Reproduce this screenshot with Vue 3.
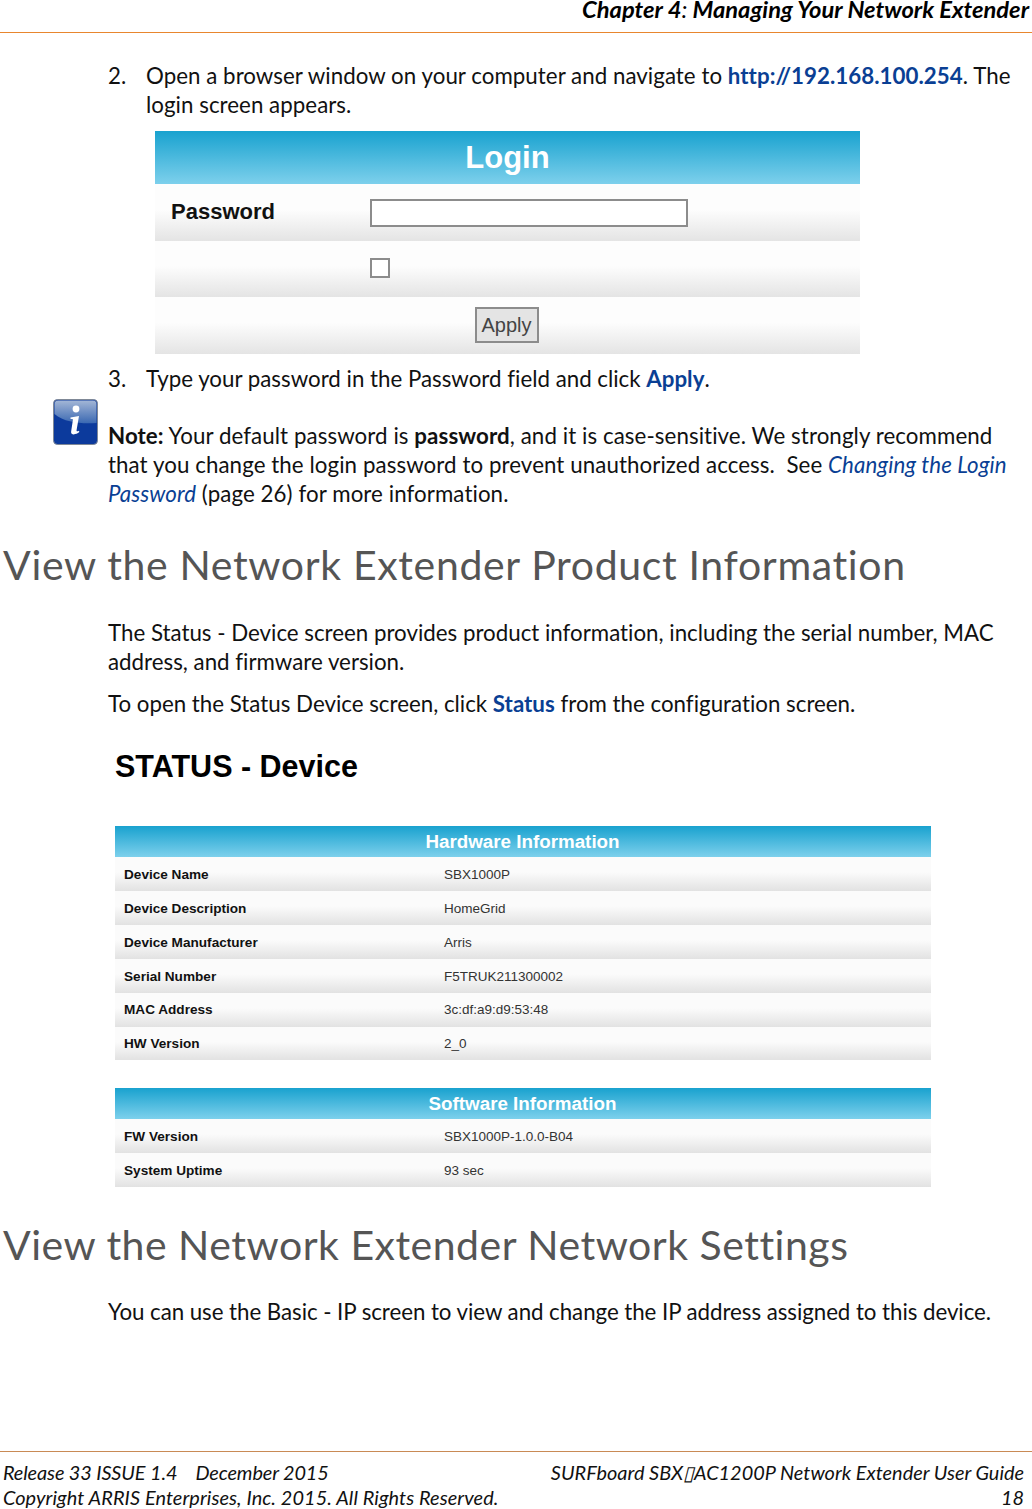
<script setup>
const hardware = [
  ['Device Name', 'SBX1000P'],
  ['Device Description', 'HomeGrid'],
  ['Device Manufacturer', 'Arris'],
  ['Serial Number', 'F5TRUK211300002'],
  ['MAC Address', '3c:df:a9:d9:53:48'],
  ['HW Version', '2_0'],
]
const software = [
  ['FW Version', 'SBX1000P-1.0.0-B04'],
  ['System Uptime', '93 sec'],
]
</script>

<template>
  <div class="page">
    <header class="top"><em>Chapter 4</em><i>:</i> <em>Managing Your Network Extender</em></header>

    <main class="body">
      <div class="step s2"><span class="num">2.</span><p>Open a browser window on your computer and navigate to <b class="link">http://192.168.100.254</b>. The login screen appears.</p></div>

      <section class="login">
        <div class="login-head">Login</div>
        <div class="login-row"><span class="pw">Password</span><span class="input"></span></div>
        <div class="login-row"><span class="check"></span></div>
        <div class="login-row center"><span class="apply">Apply</span></div>
      </section>

      <div class="step s3"><span class="num">3.</span><p>Type your password in the Password field and click <b class="link">Apply</b>.</p></div>

      <div class="note">
        <svg class="info" viewBox="0 0 45 46" width="45" height="46" aria-hidden="true">
          <defs>
            <linearGradient id="infoTop" x1="0" y1="0" x2="0" y2="1">
              <stop offset="0" stop-color="#a3b6d6"/><stop offset="1" stop-color="#3a68b2"/>
            </linearGradient>
          </defs>
          <rect x="0.5" y="0.5" width="44" height="45" rx="4" fill="#0c3a9c" stroke="#7f8896"/>
          <path d="M1.5 5a3.5 3.5 0 0 1 3.5-3.5h35a3.5 3.5 0 0 1 3.5 3.5v19C30 25 12 24 1.5 15z" fill="url(#infoTop)"/>
          <circle cx="23" cy="10" r="3.4" fill="#fff"/>
          <path d="M17.5 18.5l8.5-1.4-2.4 14c-.2 1.4.6 1.6 2.4.6l.3 1.4c-3 2.6-8.6 3.6-8.2-.4l1.9-12.4-2.6-.5z" fill="#fff"/>
        </svg>
        <p><b>Note:</b> Your default password is <b>password</b>, and it is case-sensitive. We strongly recommend that you change the login password to prevent unauthorized access.&nbsp; See <i class="link">Changing the Login Password</i> (page 26) for more information.</p>
      </div>

      <h2 class="h1">View the Network Extender Product Information</h2>
      <p class="para tight">The Status - Device screen provides product information, including the serial number, MAC address, and firmware version.</p>
      <p class="para second">To open the Status Device screen, click <b class="link">Status</b> from the configuration screen.</p>

      <section class="status">
        <h3>STATUS - Device</h3>
        <div class="tbl first">
          <div class="tbl-head">Hardware Information</div>
          <div v-for="r in hardware" :key="r[0]" class="tbl-row"><span class="k">{{ r[0] }}</span><span class="v">{{ r[1] }}</span></div>
        </div>
        <div class="tbl">
          <div class="tbl-head">Software Information</div>
          <div v-for="r in software" :key="r[0]" class="tbl-row"><span class="k">{{ r[0] }}</span><span class="v">{{ r[1] }}</span></div>
        </div>
      </section>

      <h2 class="h1 h1b">View the Network Extender Network Settings</h2>
      <p class="para last">You can use the Basic - IP screen to view and change the IP address assigned to this device.</p>
    </main>

    <footer class="foot">
      <div class="foot-row"><span class="narrow">Release 33 ISSUE 1.4 &nbsp;&nbsp; December 2015</span><span>SURFboard SBX▯AC1200P Network Extender User Guide</span></div>
      <div class="foot-row"><span class="wide">Copyright ARRIS Enterprises, Inc. 2015. All Rights Reserved.</span><span>18</span></div>
    </footer>
  </div>
</template>

<style>
html, body { margin: 0; background: #fff; }
</style>

<style scoped>
.page {
  width: 1032px;
  height: 1509px;
  background: #fff;
  color: #111;
  font-family: Lato, "Open Sans", sans-serif;
  font-size: 22.3px;
  line-height: 29px;
  font-variant-ligatures: none;
  overflow: hidden;
  display: flex;
  flex-direction: column;
}
p { margin: 0; }
.top {
  height: 33px;
  box-sizing: border-box;
  border-bottom: 1px solid #e8862e;
  text-align: right;
  padding-right: 3px;
  font-style: italic;
  font-weight: 700;
  font-size: 23.7px;
  line-height: 18px;
  color: #000;
  flex: none;
}
.top em { font-style: italic; }
.top i { font-weight: 400; }
.body { flex: 1; min-height: 0; }
.link { color: #0a3f94; }
i.link { font-style: italic; }
.step { display: flex; padding-left: 108px; padding-right: 20px; }
.num { width: 38px; flex: none; }
.s2 { padding-top: 28px; letter-spacing: 0.04px; }
.login {
  margin: 12px 0 0 155px;
  width: 705px;
}
.login-head {
  height: 53px;
  background: linear-gradient(#19a2cf, #7dd0ec);
  color: #fff;
  font: 700 31px/53px "Liberation Sans", Arial, sans-serif;
  text-align: center;
}
.login-row {
  height: 56.67px;
  background: linear-gradient(#fdfdfd 45%, #e4e4e4);
  display: flex;
  align-items: center;
  padding-left: 215px;
  position: relative;
}
.pw {
  position: absolute;
  left: 16px;
  font: 700 22px/1 "Liberation Sans", Arial, sans-serif;
  color: #111;
}
.input {
  width: 318px;
  height: 28px;
  margin-top: 2px;
  box-sizing: border-box;
  background: #fff;
  border: 2px solid #8c8c8c;
}
.check {
  width: 20px;
  height: 20px;
  margin-bottom: 2px;
  box-sizing: border-box;
  background: #fff;
  border: 2px solid #8c8c8c;
}
.center { padding-left: 0; justify-content: center; }
.apply {
  margin-left: -2px;
  margin-bottom: 2px;
  width: 64px;
  height: 36px;
  box-sizing: border-box;
  background: #e4e4e4;
  border: 2px solid #8c8c8c;
  color: #444;
  font: 400 20px/32px "Liberation Sans", Arial, sans-serif;
  text-align: center;
}
.s3 { padding-top: 10px; }
.note { position: relative; padding: 28.5px 20px 0 108px; letter-spacing: 0.08px; }
.info { position: absolute; left: 53px; top: 6px; }
.h1 {
  margin: 29px 0 0 3px;
  font-weight: 400;
  font-size: 41px;
  line-height: 56px;
  color: #555;
  letter-spacing: 0.65px;
}
.para { padding: 0 20px 0 108px; }
.tight { margin-top: 25px; }
.second { margin-top: 13px; }
.status { margin-top: 30px; padding-left: 115px; width: 816px; }
.status h3 {
  margin: 0;
  font: 700 30.5px/36px "Liberation Sans", Arial, sans-serif;
  color: #000;
}
.tbl { margin-top: 28px; }
.tbl.first { margin-top: 42px; }
.tbl-head {
  height: 31px;
  background: linear-gradient(#19a2cf, #7dd0ec);
  color: #fff;
  font: 700 18.8px/31px "Liberation Sans", Arial, sans-serif;
  text-align: center;
  padding-right: 1px;
}
.tbl-row {
  height: 33.83px;
  box-sizing: border-box;
  padding-top: 1px;
  background: linear-gradient(#fbfbfb 45%, #e2e2e2);
  display: flex;
  align-items: center;
  font: 400 13.5px/1 "Liberation Sans", Arial, sans-serif;
}
.k { width: 329px; padding-left: 9px; box-sizing: border-box; font-weight: 700; font-size: 13.6px; color: #111; }
.v { color: #333; }
.h1b { margin-top: 30px; letter-spacing: 0.5px; }
.last { margin-top: 24px; letter-spacing: -0.05px; }
.foot {
  flex: none;
  height: 58px;
  box-sizing: border-box;
  border-top: 1px solid #c98a55;
  padding: 8px 8px 0 3px;
  font-style: italic;
  font-size: 19.9px;
  line-height: 25px;
}
.foot-row { display: flex; justify-content: space-between; }
.narrow { letter-spacing: -0.12px; }
.wide { letter-spacing: 0.08px; }
</style>
